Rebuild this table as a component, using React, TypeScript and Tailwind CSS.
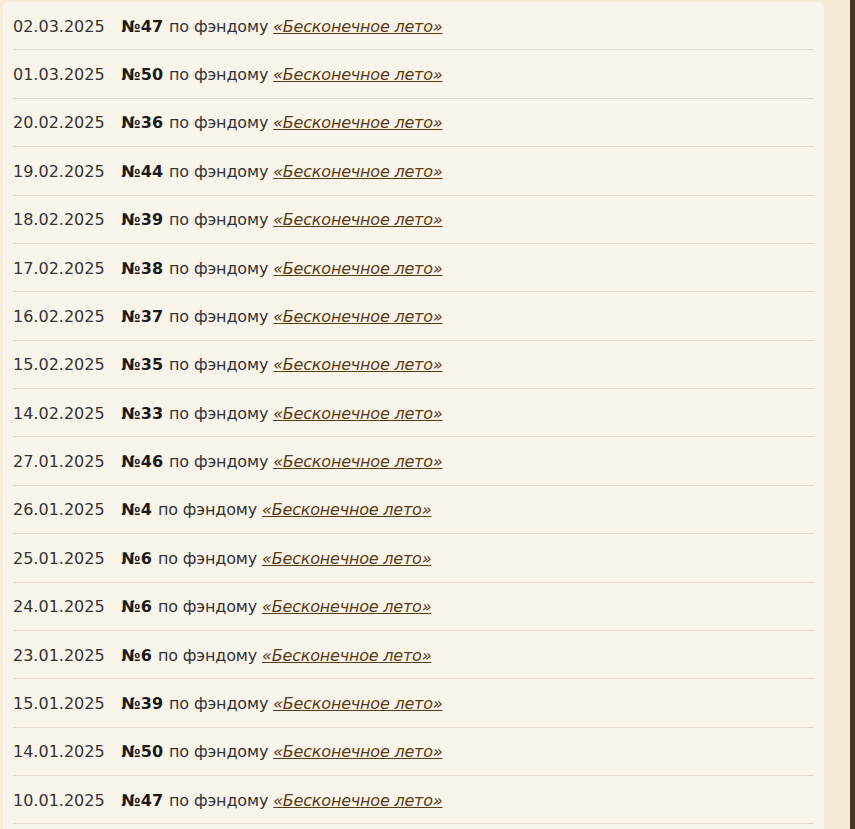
import React from 'react';

// Список записей: дата, номер, фэндом
interface Entry {
  date: string;
  num: number;
}

const entries: Entry[] = [
  { date: '02.03.2025', num: 47 },
  { date: '01.03.2025', num: 50 },
  { date: '20.02.2025', num: 36 },
  { date: '19.02.2025', num: 44 },
  { date: '18.02.2025', num: 39 },
  { date: '17.02.2025', num: 38 },
  { date: '16.02.2025', num: 37 },
  { date: '15.02.2025', num: 35 },
  { date: '14.02.2025', num: 33 },
  { date: '27.01.2025', num: 46 },
  { date: '26.01.2025', num: 4 },
  { date: '25.01.2025', num: 6 },
  { date: '24.01.2025', num: 6 },
  { date: '23.01.2025', num: 6 },
  { date: '15.01.2025', num: 39 },
  { date: '14.01.2025', num: 50 },
  { date: '10.01.2025', num: 47 },
];

const App: React.FC = () => {
  return (
    <div className="h-[829px] overflow-hidden bg-[#f4ebd9] flex font-['DejaVu_Sans',Verdana,sans-serif] text-[16px]">
      <div className="w-[850px] flex-none pl-[3px] pt-[2px]">
        <div className="w-[821px] h-full bg-[#f9f5eb] rounded-t-[6px] px-[10px]">
          {entries.map((e, i) => (
            <div
              key={i}
              className={`h-[48.375px] pt-[2px] flex items-center border-b ${i < 2 ? 'border-[#dedbd0]' : 'border-[#e9d8cc]'} text-[#333333] whitespace-nowrap`}
            >
              <span>{e.date}</span>
              <b className="ml-[17px] text-[#1a1a1a]">№{e.num}</b>
              <span className="ml-[1px] tracking-[-0.15px]">&nbsp;по фэндому&nbsp;</span>
              <a href="#" className="italic underline tracking-[-0.2px] text-[#5b3a14]">«Бесконечное лето»</a>
            </div>
          ))}
        </div>
      </div>
      <div className="flex-1 bg-[#4a3526]" />
    </div>
  );
};

export default App;
